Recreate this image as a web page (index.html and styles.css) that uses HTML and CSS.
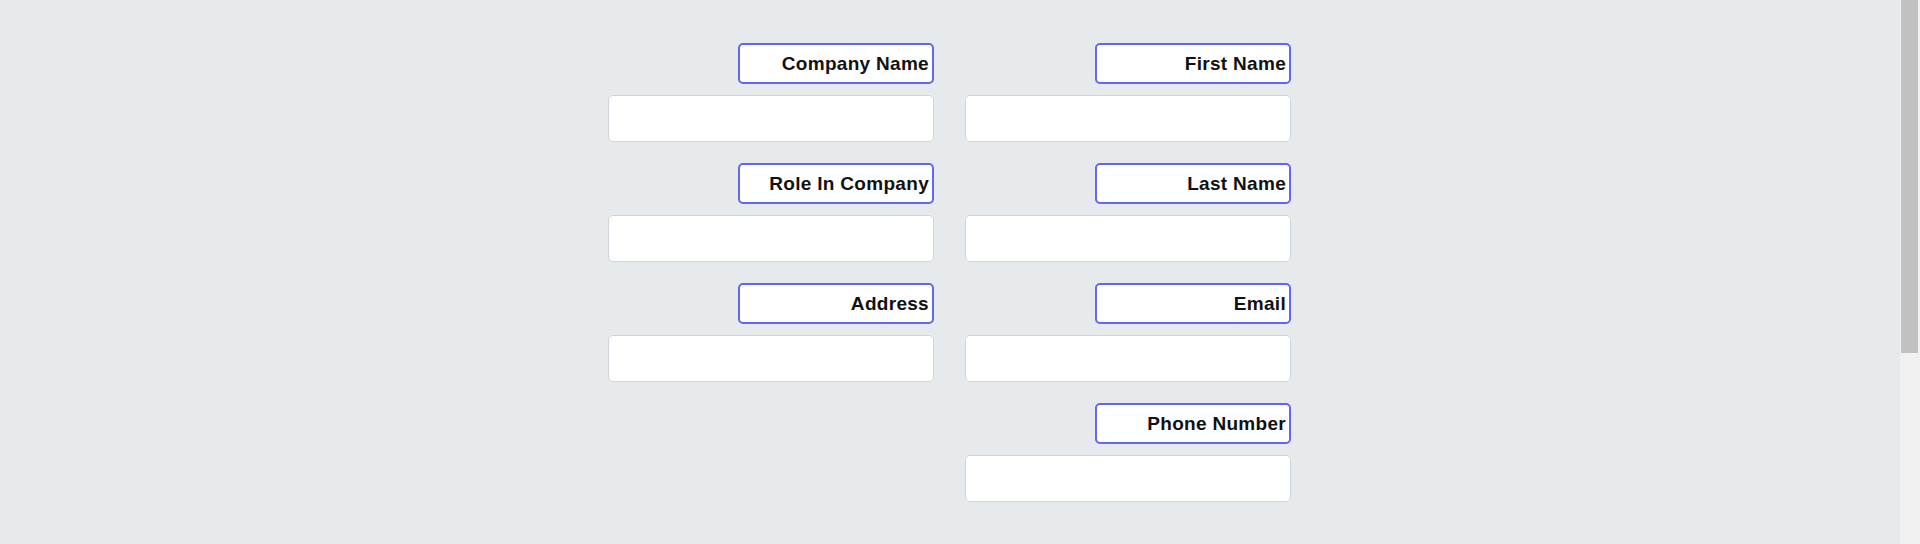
FILE: index.html
```html
<!DOCTYPE html>
<html lang="en">
<head>
<meta charset="utf-8">
<title>Form</title>
<link rel="stylesheet" href="styles.css">
</head>
<body>
<div class="shell">
  <main class="page">
    <form class="form-grid">
      <div class="column">
        <div class="field"><label class="field-label">Company Name</label><input class="field-input" type="text"></div>
        <div class="field"><label class="field-label">Role In Company</label><input class="field-input" type="text"></div>
        <div class="field"><label class="field-label">Address</label><input class="field-input" type="text"></div>
      </div>
      <div class="column">
        <div class="field"><label class="field-label">First Name</label><input class="field-input" type="text"></div>
        <div class="field"><label class="field-label">Last Name</label><input class="field-input" type="text"></div>
        <div class="field"><label class="field-label">Email</label><input class="field-input" type="text"></div>
        <div class="field"><label class="field-label">Phone Number</label><input class="field-input" type="text"></div>
      </div>
    </form>
  </main>
  <div class="scrollbar" aria-hidden="true"><div class="scroll-thumb"></div></div>
</div>
</body>
</html>
```

FILE: styles.css
```css
html, body {
  margin: 0;
  padding: 0;
  height: 100%;
  overflow: hidden;
  background: #e6eaed;
}
body {
  font-family: "Liberation Sans", Arial, sans-serif;
}
.shell {
  display: flex;
  height: 544px;
}
.page {
  flex: 1;
  padding-top: 43px;
  box-sizing: border-box;
}
.scrollbar {
  width: 20px;
  height: 100%;
  background: #f1f1f1;
  padding-left: 1px;
  box-sizing: border-box;
}
.scroll-thumb {
  width: 17px;
  height: 353px;
  background: #c1c1c1;
}
.form-grid {
  display: grid;
  grid-template-columns: 326px 326px;
  column-gap: 31px;
  justify-content: center;
  align-items: start;
  margin-left: -1px;
}
.column {
  display: flex;
  flex-direction: column;
  gap: 21px;
}
.field {
  display: flex;
  flex-direction: column;
  align-items: flex-end;
}
.field-label {
  box-sizing: border-box;
  width: 196px;
  height: 41px;
  margin-bottom: 11px;
  padding: 0 3px 0 6px;
  display: flex;
  align-items: center;
  justify-content: flex-end;
  background: #ffffff;
  border: 2px solid #6366f1;
  border-radius: 5px;
  font-size: 19px;
  font-weight: 700;
  letter-spacing: 0.3px;
  color: #111111;
  white-space: nowrap;
}
.field-input {
  box-sizing: border-box;
  width: 326px;
  height: 47px;
  margin: 0;
  padding: 0 10px;
  background: #ffffff;
  border: 1px solid #d1d5db;
  border-radius: 5px;
  font-family: inherit;
  font-size: 16px;
  outline: none;
}
```
